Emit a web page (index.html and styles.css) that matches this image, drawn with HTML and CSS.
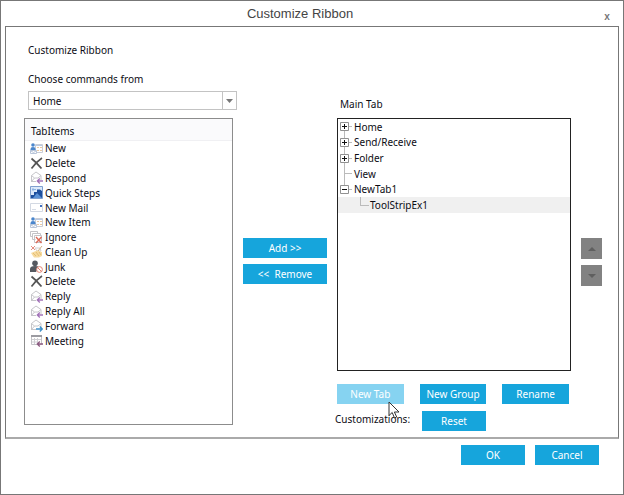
FILE: index.html
```html
<!DOCTYPE html>
<html lang="en">
<head>
<meta charset="utf-8">
<title>Customize Ribbon</title>
<link rel="stylesheet" href="styles.css">
</head>
<body>
<svg class="sprite" aria-hidden="true">
  <symbol id="i-new" viewBox="0 0 13 13">
    <path d="M5.500 2.500h7v8h-7z" fill="#fff" stroke="#c9cdd6"/>
    <path d="M6 3.500h6" stroke="#b9c9e2"/>
    <path d="M7 5.500h2M10 5.500h2M7 8.500h2M10 8.500h2" stroke="#eac9a3"/>
    <circle cx="3" cy="3" r="1.800" fill="#4a86cc"/>
    <path d="M0.500 9V7q0-2 2.500-2T5.500 7v2z" fill="#4a86cc"/>
    <path d="M.5 8.500h6v3h-6z" fill="#fff" stroke="#b9c6da"/>
    <path d="M1 9l2.500 1.500L6 9" fill="none" stroke="#b9c6da"/>
  </symbol>
  <symbol id="i-delete" viewBox="0 0 13 13">
    <path d="M1.500 1.500Q6 5 11.500 11.500" fill="none" stroke="#555" stroke-width="1.800"/>
    <path d="M12 1Q6 5 1.500 11.500" fill="none" stroke="#555" stroke-width="1.600"/>
  </symbol>
  <symbol id="i-envelope" viewBox="0 0 13 13">
    <path d="M1.500 11V4.500L6 1l5 3.500V9M1.500 10.500H6" fill="#fff" stroke="#c6c6ca"/>
    <path d="M1.500 4.500l3 2.500h3.500l3-2.500M1.500 10.500L4.500 7" fill="none" stroke="#c6c6ca"/>
  </symbol>
  <symbol id="i-reply" viewBox="0 0 13 13">
    <use href="#i-envelope"/>
    <path d="M13 10H7.500M9.800 7.500L7.300 10l2.500 2.500" fill="none" stroke="#a273b8" stroke-width="1.300"/>
  </symbol>
  <symbol id="i-forward" viewBox="0 0 13 13">
    <use href="#i-envelope"/>
    <path d="M6 10h6M9.800 7.500l2.500 2.500-2.500 2.500" fill="none" stroke="#3d8fc9" stroke-width="1.300"/>
  </symbol>
  <symbol id="i-steps" viewBox="0 0 13 13">
    <path d="M.5.5h12v12H.5z" fill="#dbe9fa" stroke="#7f9fce"/>
    <path d="M1 9h3V6h3V3.500h3l2 1.500v7H1z" fill="#1d4f9e"/>
    <path d="M3 12l4-5 5 5z" fill="#5b92d6"/>
    <path d="M3 2v3M2 3.500h4" stroke="#8db3e3"/>
  </symbol>
  <symbol id="i-mail" viewBox="0 0 13 13">
    <path d="M.5 2.500h12v8H.5z" fill="#fff" stroke="#d3d9e3"/>
    <path d="M2 8.500h4" stroke="#d6dce6"/>
    <path d="M10 4h2v2h-2z" fill="#3f6fc0"/>
  </symbol>
  <symbol id="i-ignore" viewBox="0 0 13 13">
    <path d="M.5 3V.5h7V2M2.500 5.500h-2V3M2.500 2.500h8V5M2.500 2.500v6h3M4.500 4.500h7v7h-7z" fill="none" stroke="#c3c3c7"/>
    <path d="M6 6l5.500 6M11.500 6L6 12" stroke="#dc6957" stroke-width="1.400"/>
  </symbol>
  <symbol id="i-clean" viewBox="0 0 13 13">
    <path d="M1 1l4 4M5 1L1 5" stroke="#e58d80"/>
    <path d="M5 3h5l1 3H7z" fill="#fff" stroke="#d0d0d2"/>
    <path d="M12 1L8 6" stroke="#d0b183"/>
    <path d="M1 8l6-2.500 5 1.500v4l-3 1.500H4z" fill="#f6da9f"/>
    <path d="M3 8l3 3M6 7l3 4M9 7l2 3" stroke="#e5be74"/>
  </symbol>
  <symbol id="i-junk" viewBox="0 0 13 13">
    <circle cx="5" cy="3.300" r="2.800" fill="#555960"/>
    <path d="M0 12V9q0-3 5-3 3 0 4 1L6 12z" fill="#555960"/>
    <circle cx="9.500" cy="9.500" r="2.900" fill="#fff" stroke="#e28473"/>
    <path d="M7.500 7.500l4 4" stroke="#e28473"/>
  </symbol>
  <symbol id="i-meeting" viewBox="0 0 13 13">
    <path d="M1.500 1.500h10v9h-10z" fill="#fff" stroke="#c3c3c7"/>
    <path d="M1 2h11" stroke="#9b9ba1" stroke-width="2"/>
    <path d="M2 5.500h9M2 8h5M4.500 4v6M7.500 4v5" stroke="#cfcfd3"/>
    <path d="M13 10H7.500M9.800 7.500L7.300 10l2.500 2.500" fill="none" stroke="#8c5a80" stroke-width="1.300"/>
  </symbol>
  <symbol id="i-plus" viewBox="0 0 9 9">
    <path d="M.5.5h8v8h-8z" fill="#fff" stroke="#919191"/>
    <path d="M2 4.500h5M4.500 2v5" stroke="#111"/>
  </symbol>
  <symbol id="i-minus" viewBox="0 0 9 9">
    <path d="M.5.5h8v8h-8z" fill="#fff" stroke="#919191"/>
    <path d="M2 4.500h5" stroke="#111"/>
  </symbol>
</svg>

<main class="dialog">
  <header class="titlebar">
    <h1 class="title">Customize Ribbon</h1>
    <button class="close" type="button" aria-label="Close">x</button>
  </header>

  <section class="panel">
    <div class="commands">
      <h2 class="heading">Customize Ribbon</h2>
      <label class="source-label" for="source">Choose commands from</label>
      <div class="combo">
        <select id="source" class="combo-select"><option>Home</option></select>
        <span class="combo-arrow"><svg width="7" height="4" viewBox="0 0 7 4"><path d="M0 0h7L3.500 4z" fill="#777"/></svg></span>
      </div>
      <div class="list">
        <h3 class="list-head">TabItems</h3>
        <ul class="items">
          <li class="item"><svg class="icon"><use href="#i-new"/></svg>New</li>
          <li class="item"><svg class="icon"><use href="#i-delete"/></svg>Delete</li>
          <li class="item"><svg class="icon"><use href="#i-reply"/></svg>Respond</li>
          <li class="item"><svg class="icon"><use href="#i-steps"/></svg>Quick Steps</li>
          <li class="item"><svg class="icon"><use href="#i-mail"/></svg>New Mail</li>
          <li class="item"><svg class="icon"><use href="#i-new"/></svg>New Item</li>
          <li class="item"><svg class="icon"><use href="#i-ignore"/></svg>Ignore</li>
          <li class="item"><svg class="icon"><use href="#i-clean"/></svg>Clean Up</li>
          <li class="item"><svg class="icon"><use href="#i-junk"/></svg>Junk</li>
          <li class="item"><svg class="icon"><use href="#i-delete"/></svg>Delete</li>
          <li class="item"><svg class="icon"><use href="#i-reply"/></svg>Reply</li>
          <li class="item"><svg class="icon"><use href="#i-reply"/></svg>Reply All</li>
          <li class="item"><svg class="icon"><use href="#i-forward"/></svg>Forward</li>
          <li class="item"><svg class="icon"><use href="#i-meeting"/></svg>Meeting</li>
        </ul>
      </div>
    </div>

    <div class="transfer">
      <button class="btn" type="button">Add &gt;&gt;</button>
      <button class="btn" type="button">&lt;&lt;&nbsp; Remove</button>
    </div>

    <div class="tabs">
      <h2 class="tabs-label">Main Tab</h2>
      <div class="tree-box">
        <ul class="tree">
          <li class="node first"><button class="toggle" type="button" aria-label="Expand Home"><svg class="box"><use href="#i-plus"/></svg></button>Home</li>
          <li class="node"><button class="toggle" type="button" aria-label="Expand Send/Receive"><svg class="box"><use href="#i-plus"/></svg></button>Send/Receive</li>
          <li class="node"><button class="toggle" type="button" aria-label="Expand Folder"><svg class="box"><use href="#i-plus"/></svg></button>Folder</li>
          <li class="node"><span class="toggle"></span>View</li>
          <li class="node last"><button class="toggle" type="button" aria-label="Collapse NewTab1"><svg class="box"><use href="#i-minus"/></svg></button>NewTab1</li>
          <li class="node child">ToolStripEx1</li>
        </ul>
      </div>
      <div class="actions">
        <div class="hovered">
          <button class="btn btn-hover" type="button">New Tab</button>
          <svg class="pointer" viewBox="0 0 12 18" aria-hidden="true"><path d="M1 1v13.500l3.200-3 2.300 5.500 2.200-1-2.300-5H11z" fill="#fff" stroke="#333"/></svg>
        </div>
        <button class="btn" type="button">New Group</button>
        <button class="btn" type="button">Rename</button>
      </div>
      <div class="reset-row">
        <span class="reset-label">Customizations:</span>
        <button class="btn btn-small" type="button">Reset</button>
      </div>
    </div>

    <div class="order">
      <button class="move" type="button" aria-label="Move up"><svg width="8" height="4" viewBox="0 0 8 4"><path d="M0 4h8L4 0z" fill="#5f5f5f"/></svg></button>
      <button class="move" type="button" aria-label="Move down"><svg width="8" height="4" viewBox="0 0 8 4"><path d="M0 0h8L4 4z" fill="#5f5f5f"/></svg></button>
    </div>
  </section>

  <footer class="footer">
    <button class="btn btn-small" type="button">OK</button>
    <button class="btn btn-small" type="button">Cancel</button>
  </footer>
</main>
</body>
</html>
```
FILE: styles.css
```css
* { box-sizing: border-box; }

body {
  margin: 0;
  background: #fff;
  color: #0c0c14;
  font: 10px/16px "Noto Sans", "Open Sans", sans-serif;
}

h1, h2, h3, ul { margin: 0; padding: 0; font-size: inherit; font-weight: normal; }
ul { list-style: none; }
button, select { font: inherit; border: 0; border-radius: 0; padding: 0; margin: 0; }
.sprite { display: none; }

.dialog {
  display: flex;
  flex-direction: column;
  min-height: 100vh;
  padding: 0 4px;
  border: 1px solid #777;
}

.titlebar {
  display: grid;
  grid-template-columns: 1fr 24px;
  align-items: center;
  height: 25px;
}
.title {
  text-align: center;
  font: 13px/16px "Liberation Sans", Arial, sans-serif;
  color: #444;
}
.close { padding-top: 4px; background: none; color: #777; font-weight: 600; }

.panel {
  display: grid;
  grid-template-columns: minmax(0, 209fr) 84px minmax(0, 234fr) 21px;
  column-gap: 10px;
  padding: 15px 16px 6px 18px;
  border: 1px solid #777;
  border-bottom: 2px solid #aaa;
}

.commands { display: flex; flex-direction: column; padding-bottom: 6px; }
.heading { margin-left: 4px; }
.source-label { margin: 13px 0 4px 4px; }

.combo {
  display: flex;
  height: 19px;
  margin: 0 -4px 8px 4px;
  border: 1px solid #c3c3c3;
}
.combo-select {
  flex: 1;
  appearance: none;
  padding-left: 4px;
  background: #fff;
  color: inherit;
}
.combo-arrow {
  display: flex;
  align-items: center;
  justify-content: center;
  width: 14px;
  border-left: 1px solid #c3c3c3;
}

.list { flex: 1; border: 1px solid #8c8c8c; }
.list-head {
  height: 22px;
  padding: 4px 6px 0;
  background: #fafafc;
  border-bottom: 1px solid #f0f0f3;
}
.items { display: grid; grid-auto-rows: 1fr; height: 207px; line-height: 14px; }
.item { display: flex; align-items: center; gap: 2px; padding-left: 5px; }
.icon { width: 13px; height: 13px; }

.btn { height: 20px; background: #16a5dc; color: #fff; }
.btn-hover { width: 100%; background: #86d3f1; }
.btn-small { width: 64px; }

.transfer, .order { display: flex; flex-direction: column; gap: 6px; padding-top: 196px; }

.tabs { padding-top: 54px; }
.tabs-label { margin: 0 3px 6px; }
.tree-box { height: 253px; border: 1px solid #222; }
.tree { display: grid; grid-auto-rows: 1fr; height: 94px; line-height: 14px; }
.node {
  display: flex;
  align-items: center;
  padding-left: 2px;
  background: linear-gradient(#bbb, #bbb) 6px 0 / 1px 100% no-repeat;
}
.node.first { background-position: 6px 100%; background-size: 1px 50%; }
.node.last { background-size: 1px 50%; }
.toggle {
  display: flex;
  align-items: center;
  width: 14px;
  height: 9px;
  background: linear-gradient(#bbb, #bbb) 4px 4px / 8px 1px no-repeat;
}
.box { width: 9px; height: 9px; }
.node.child {
  padding-left: 32px;
  background-color: #f0f0f0;
  background-image: linear-gradient(#bbb, #bbb), linear-gradient(#bbb, #bbb);
  background-position: 22px 0, 22px 8px;
  background-size: 1px 8px, 9px 1px;
}

.actions {
  display: grid;
  grid-template-columns: repeat(3, 1fr);
  gap: 16px;
  margin: 13px 2px 7px 0;
}
.hovered { position: relative; }
.pointer { position: absolute; left: 51px; top: 17px; width: 12px; height: 18px; }
.reset-row { display: flex; }
.reset-label { width: 87px; margin-left: -2px; white-space: nowrap; }

.move {
  display: flex;
  align-items: center;
  justify-content: center;
  height: 21px;
  background: #828282;
}

.footer {
  display: flex;
  justify-content: flex-end;
  gap: 10px;
  padding: 6px 20px 0;
}
```
